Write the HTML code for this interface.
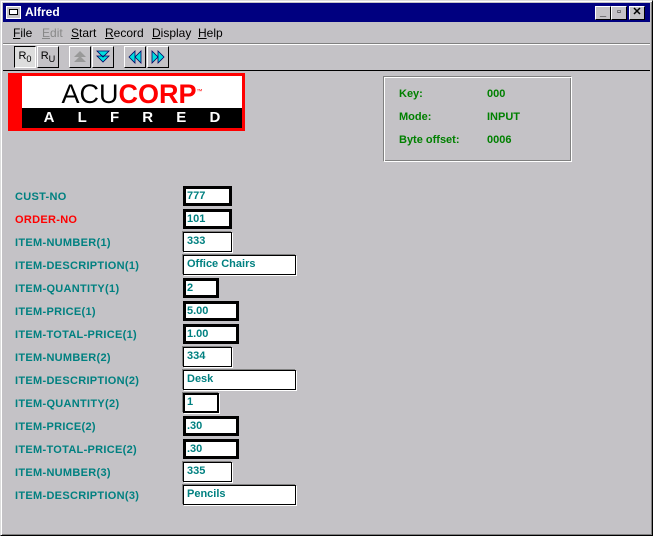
<!DOCTYPE html>
<html><head><style>
*{margin:0;padding:0;box-sizing:border-box}
body{width:655px;height:545px;background:#fff;position:relative;overflow:hidden;font-family:"Liberation Sans",sans-serif}
.a{position:absolute}
.win{left:0;top:0;width:653px;height:536px;background:#c4c2c6;border:1px solid #dcdcdc;border-right-color:#000;border-bottom-color:#000;box-shadow:inset 1px 1px 0 #fff,inset -1px -1px 0 #808080}
.title{left:3px;top:3px;width:647px;height:19px;background:#000080;color:#fff;font-weight:bold;font-size:12px;line-height:19px;padding-left:22px}
.tb{top:6px;width:16px;height:14px;background:#c4c2c6;border:1px solid #fff;border-right-color:#000;border-bottom-color:#000;font-size:11px;line-height:11px;text-align:center;color:#000;font-weight:bold}
.menu{top:26px;font-size:12px;color:#000}
.menu span{position:absolute}
.lbl{left:15px;font-size:11px;font-weight:bold;color:#008080;letter-spacing:0.3px}
.fld{left:183px;height:20px;background:#fff;font-size:11px;font-weight:bold;color:#008080;padding-left:3px;line-height:16px}
.thin{border:1px solid #000;box-shadow:1px 1px 0 #fff,-1px -1px 0 #808080}
.thick{border:3px solid #000;line-height:14px;padding-left:1px}
.btn{top:46px;height:22px;width:22px;background:#c4c2c6;border:1px solid #fff;border-right-color:#000;border-bottom-color:#000;font-size:11px;text-align:center}
.btn svg{position:absolute;left:2px;top:2px}
.g{font-size:11px;font-weight:bold;color:#008000}
</style></head><body>
<div class="a win"></div>
<div class="a title">Alfred</div>
<div class="a" style="left:6px;top:6px;width:15px;height:13px;background:#c4c2c6;border:1px solid #fff"><div style="margin:2px;height:6px;background:#fff;border:1px solid #000"></div></div>
<div class="a tb" style="left:595px">_</div>
<div class="a tb" style="left:611px">▫</div>
<div class="a tb" style="left:629px">✕</div>
<div class="a menu" style="left:0;width:655px">
<span style="left:13px"><u>F</u>ile</span><span style="left:42px;color:#888"><u>E</u>dit</span><span style="left:71px"><u>S</u>tart</span><span style="left:105px"><u>R</u>ecord</span><span style="left:152px"><u>D</u>isplay</span><span style="left:198px"><u>H</u>elp</span></div>
<div class="a" style="left:3px;top:43px;width:647px;height:2px;border-top:1px solid #808080;border-bottom:1px solid #fff"></div>
<div class="a btn" style="left:14px;background:#ddd;border-color:#000 #fff #fff #000;line-height:18px">R<sub>0</sub></div>
<div class="a btn" style="left:37px;line-height:18px">R<sub>U</sub></div>
<div class="a btn" style="left:69px"><svg width="16" height="16"><path d="M8 2L2 8H14Z M8 7L2 13H14Z" fill="#999"/></svg></div>
<div class="a btn" style="left:92px"><svg width="16" height="16"><path d="M2 2H14L8 8Z M2 7H14L8 13Z" fill="#0dd" stroke="#006" stroke-width=".8"/></svg></div>
<div class="a btn" style="left:124px"><svg width="16" height="16"><path d="M8 2L2 8L8 14Z M14 2L8 8L14 14Z" fill="#0dd" stroke="#006" stroke-width=".8"/></svg></div>
<div class="a btn" style="left:147px"><svg width="16" height="16"><path d="M2 2L8 8L2 14Z M8 2L14 8L8 14Z" fill="#0dd" stroke="#006" stroke-width=".8"/></svg></div>
<div class="a" style="left:3px;top:70px;width:647px;height:1px;background:#000"></div>
<div class="a" style="left:8px;top:73px;width:237px;height:58px;background:#f00"></div>
<div class="a" style="left:22px;top:76px;width:220px;height:32px;background:#fff;font-size:27px;line-height:32px;text-align:center;letter-spacing:0px">ACU<b style="color:#f00">CORP</b><sup style="font-size:6px;color:#f00">™</sup></div>
<div class="a" style="left:22px;top:108px;width:220px;height:20px;background:#000;color:#fff;font-weight:bold;font-size:15px;line-height:20px;display:flex;justify-content:space-around;padding:0 10px"><span>A</span><span>L</span><span>F</span><span>R</span><span>E</span><span>D</span></div>
<div class="a" style="left:383px;top:76px;width:189px;height:86px;border:1px solid #808080;border-right-color:#fff;border-bottom-color:#fff;box-shadow:inset 1px 1px 0 #fff,inset -1px -1px 0 #808080"></div>
<div class="a g" style="left:399px;top:88px">Key:</div><div class="a g" style="left:487px;top:88px">000</div>
<div class="a g" style="left:399px;top:111px">Mode:</div><div class="a g" style="left:487px;top:111px">INPUT</div>
<div class="a g" style="left:399px;top:134px">Byte offset:</div><div class="a g" style="left:487px;top:134px">0006</div>

<div class="a lbl" style="top:191px">CUST-NO</div><div class="a fld thick" style="top:186px;width:49px">777</div>
<div class="a lbl" style="top:214px;color:#f00">ORDER-NO</div><div class="a fld thick" style="top:209px;width:49px">101</div>
<div class="a lbl" style="top:237px">ITEM-NUMBER(1)</div><div class="a fld thin" style="top:232px;width:49px">333</div>
<div class="a lbl" style="top:260px">ITEM-DESCRIPTION(1)</div><div class="a fld thin" style="top:255px;width:113px">Office Chairs</div>
<div class="a lbl" style="top:283px">ITEM-QUANTITY(1)</div><div class="a fld thick" style="top:278px;width:36px">2</div>
<div class="a lbl" style="top:306px">ITEM-PRICE(1)</div><div class="a fld thick" style="top:301px;width:56px">5.00</div>
<div class="a lbl" style="top:329px">ITEM-TOTAL-PRICE(1)</div><div class="a fld thick" style="top:324px;width:56px">1.00</div>
<div class="a lbl" style="top:352px">ITEM-NUMBER(2)</div><div class="a fld thin" style="top:347px;width:49px">334</div>
<div class="a lbl" style="top:375px">ITEM-DESCRIPTION(2)</div><div class="a fld thin" style="top:370px;width:113px">Desk</div>
<div class="a lbl" style="top:398px">ITEM-QUANTITY(2)</div><div class="a fld thin" style="top:393px;width:36px;border-width:2px;padding-left:2px;line-height:15px">1</div>
<div class="a lbl" style="top:421px">ITEM-PRICE(2)</div><div class="a fld thick" style="top:416px;width:56px">.30</div>
<div class="a lbl" style="top:444px">ITEM-TOTAL-PRICE(2)</div><div class="a fld thick" style="top:439px;width:56px">.30</div>
<div class="a lbl" style="top:467px">ITEM-NUMBER(3)</div><div class="a fld thin" style="top:462px;width:49px">335</div>
<div class="a lbl" style="top:490px">ITEM-DESCRIPTION(3)</div><div class="a fld thin" style="top:485px;width:113px">Pencils</div>
</body></html>
